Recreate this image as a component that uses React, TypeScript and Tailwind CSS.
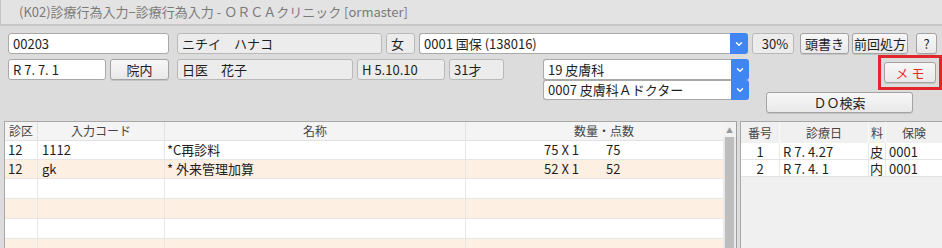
import { ChevronDown } from 'lucide-react';

const FONT = "font-['Noto_Sans_CJK_JP','Liberation_Sans',sans-serif]";

function TextField({ value, className = '' }: { value: string; className?: string }) {
  return (
    <div
      className={`flex items-center pl-[4px] bg-white border border-[#a9a9a9] rounded-[3px] whitespace-nowrap overflow-hidden ${className}`}
    >
      {value}
    </div>
  );
}

function ReadOnly({ value, className = '' }: { value: string; className?: string }) {
  return (
    <div
      className={`flex items-center pl-[4px] bg-[#ececec] border border-[#b9b9b9] rounded-[3px] whitespace-nowrap overflow-hidden ${className}`}
    >
      {value}
    </div>
  );
}

function Button({ label, className = '' }: { label: string; className?: string }) {
  return (
    <div
      className={`flex items-center justify-center bg-gradient-to-b from-[#f7f7f7] to-[#e9e9e9] border border-[#a3a3a3] rounded-[3px] shadow-[0_1px_0_#c4c4c4] whitespace-nowrap ${className}`}
    >
      {label}
    </div>
  );
}

function Combo({ value, className = '' }: { value: string; className?: string }) {
  return (
    <div className={`flex ${className}`}>
      <div className="flex-1 flex items-center pl-[4px] bg-white border border-r-0 border-[#a9a9a9] rounded-l-[3px] whitespace-nowrap overflow-hidden">
        {value}
      </div>
      <div className="w-[18px] flex items-center justify-center bg-[#3f86f2] rounded-r-[3px]">
        <ChevronDown className="w-[10px] h-[10px] text-white" strokeWidth={3.5} />
      </div>
    </div>
  );
}

const orders = [
  { ku: '12', code: '1112', name: '*C再診料', qty: '75 X 1', pts: '75' },
  { ku: '12', code: 'gk', name: '* 外来管理加算', qty: '52 X 1', pts: '52' },
  null,
  null,
  null,
  null,
];
const rowHeights = ['h-[19px]', 'h-[19px]', 'h-[20px]', 'h-[20px]', 'h-[20px]', 'h-[20px]'];

const history = [
  { no: '1', date: 'R 7. 4.27', ka: '皮', hoken: '0001' },
  { no: '2', date: 'R 7. 4. 1', ka: '内', hoken: '0001' },
];

export default function App() {
  return (
    <div className={`w-[942px] h-[248px] overflow-hidden bg-[#dcdcdc] ${FONT} text-[13px] leading-[16px] text-[#1e1e1e] flex flex-col`}>
      {/* Title bar */}
      <div className="h-[24px] shrink-0 bg-[#e3e3e3] border-l border-[#c6c6c6] pl-[18px] flex items-center text-[13px] text-[#7a7a7a] whitespace-nowrap">
        (K02)診療行為入力−診療行為入力 - ＯＲＣＡクリニック [ormaster]
      </div>
      <div className="h-[2px] shrink-0 bg-[#c8c8c8]" />

      {/* Patient row */}
      <div className="mt-[7px] h-[21px] shrink-0 flex pl-[8px]">
        <TextField value="00203" className="w-[161px]" />
        <ReadOnly value="ニチイ　ハナコ" className="ml-[8px] w-[205px]" />
        <ReadOnly value="女" className="ml-[4px] w-[29px]" />
        <Combo value="0001 国保 (138016)" className="ml-[4px] w-[329px]" />
        <ReadOnly value="30%" className="ml-[4px] w-[42px] justify-center pl-0" />
        <Button label="頭書き" className="ml-[6px] w-[49px]" />
        <Button label="前回処方" className="ml-[3px] w-[56px]" />
        <Button label="?" className="ml-[8px] w-[21px]" />
      </div>

      {/* Second block */}
      <div className="mt-[1px] h-[58px] shrink-0 flex items-start pl-[8px]">
        <div className="mt-[4px] h-[21px] flex">
          <TextField value="R 7. 7. 1" className="w-[98px]" />
          <Button label="院内" className="ml-[4px] w-[59px]" />
          <ReadOnly value="日医　花子" className="ml-[8px] w-[176px]" />
          <ReadOnly value="H 5.10.10" className="ml-[4px] w-[88px]" />
          <ReadOnly value="31才" className="ml-[4px] w-[55px]" />
        </div>
        <div className="ml-[39px] mt-[4px] w-[206px] flex flex-col">
          <Combo value="19 皮膚科" className="h-[21px]" />
          <Combo value="0007 皮膚科Ａドクター" className="h-[20px]" />
        </div>
        <div className="ml-[17px] w-[176px] flex flex-col">
          <div className="self-end w-[64px] h-[35px] border-[3px] border-[#e3262b] px-[3px] pt-[4px]">
            <Button label="メ モ" className="h-[21px] text-[#ee2a2a]" />
          </div>
          <Button label="ＤＯ検索" className="mt-[2px] w-[147px] h-[21px]" />
        </div>
      </div>

      {/* Tables */}
      <div className="mt-[8px] flex-1 flex min-h-0">
        {/* Order table */}
        <div className="ml-[4px] w-[733px] flex border-l border-t border-[#a8a8a8] bg-white">
          <div className="flex-1 flex flex-col">
            <div className="h-[19px] shrink-0 flex bg-[#f4f4f4] border-b border-[#e2e2e2] text-[12px] text-[#444]">
              <div className="w-[33px] flex items-center justify-center border-r border-[#e2e2e2]">診区</div>
              <div className="w-[127px] flex items-center justify-center border-r border-[#e2e2e2]">入力コード</div>
              <div className="w-[301px] flex items-center justify-center border-r border-[#e2e2e2]">名称</div>
              <div className="flex-1 flex items-center justify-center pl-[19px]">数量・点数</div>
            </div>
            {orders.map((o, i) => (
              <div
                key={i}
                className={`${rowHeights[i]} shrink-0 flex border-b border-[#e6e6e6] ${i % 2 === 1 ? 'bg-[#fdefe1]' : 'bg-white'}`}
              >
                <div className="w-[33px] flex items-center pl-[3px] border-r border-[#e6e6e6]">{o?.ku}</div>
                <div className="w-[127px] flex items-center pl-[4px] border-r border-[#e6e6e6]">{o?.code}</div>
                <div className="w-[301px] flex items-center pl-[2px] border-r border-[#e6e6e6] whitespace-nowrap">{o?.name}</div>
                <div className="flex-1 flex items-center">
                  <span className="w-[113px] text-right">{o?.qty}</span>
                  <span className="ml-[27px]">{o?.pts}</span>
                </div>
              </div>
            ))}
          </div>
          {/* Scrollbar */}
          <div className="w-[14px] flex flex-col bg-[#e9e9e9] border-r border-[#9f9f9f]">
            <div className="h-[15px] shrink-0 flex items-center justify-center bg-[#f2f2f2] text-[7px] text-[#9a9a9a]">▲</div>
            <div className="flex-1 mx-[2px] bg-[#bdbdbd]" />
          </div>
        </div>

        {/* History table */}
        <div className="ml-[3px] flex-1 flex flex-col border-l border-t border-[#a8a8a8] bg-[#f0f0f0]">
          <div className="h-[21px] shrink-0 flex text-[12px] text-[#444]">
            <div className="w-[39px] flex items-center justify-center border-r border-[#fafafa]">番号</div>
            <div className="w-[89px] flex items-center justify-center border-r border-[#fafafa]">診療日</div>
            <div className="w-[17px] flex items-center justify-center border-r border-[#fafafa]">料</div>
            <div className="flex-1 flex items-center justify-center">保険</div>
          </div>
          {history.map((h) => (
            <div key={h.no} className="h-[17px] shrink-0 flex bg-white border-b border-[#e4e4e4] leading-[15px]">
              <div className="w-[39px] flex items-center justify-center border-r border-[#e8e8e8]">{h.no}</div>
              <div className="w-[89px] flex items-center pl-[3px] border-r border-[#e8e8e8]">{h.date}</div>
              <div className="w-[17px] flex items-center pl-[1px] border-r border-[#e8e8e8]">{h.ka}</div>
              <div className="flex-1 flex items-center pl-[3px]">{h.hoken}</div>
            </div>
          ))}
        </div>
      </div>
    </div>
  );
}
